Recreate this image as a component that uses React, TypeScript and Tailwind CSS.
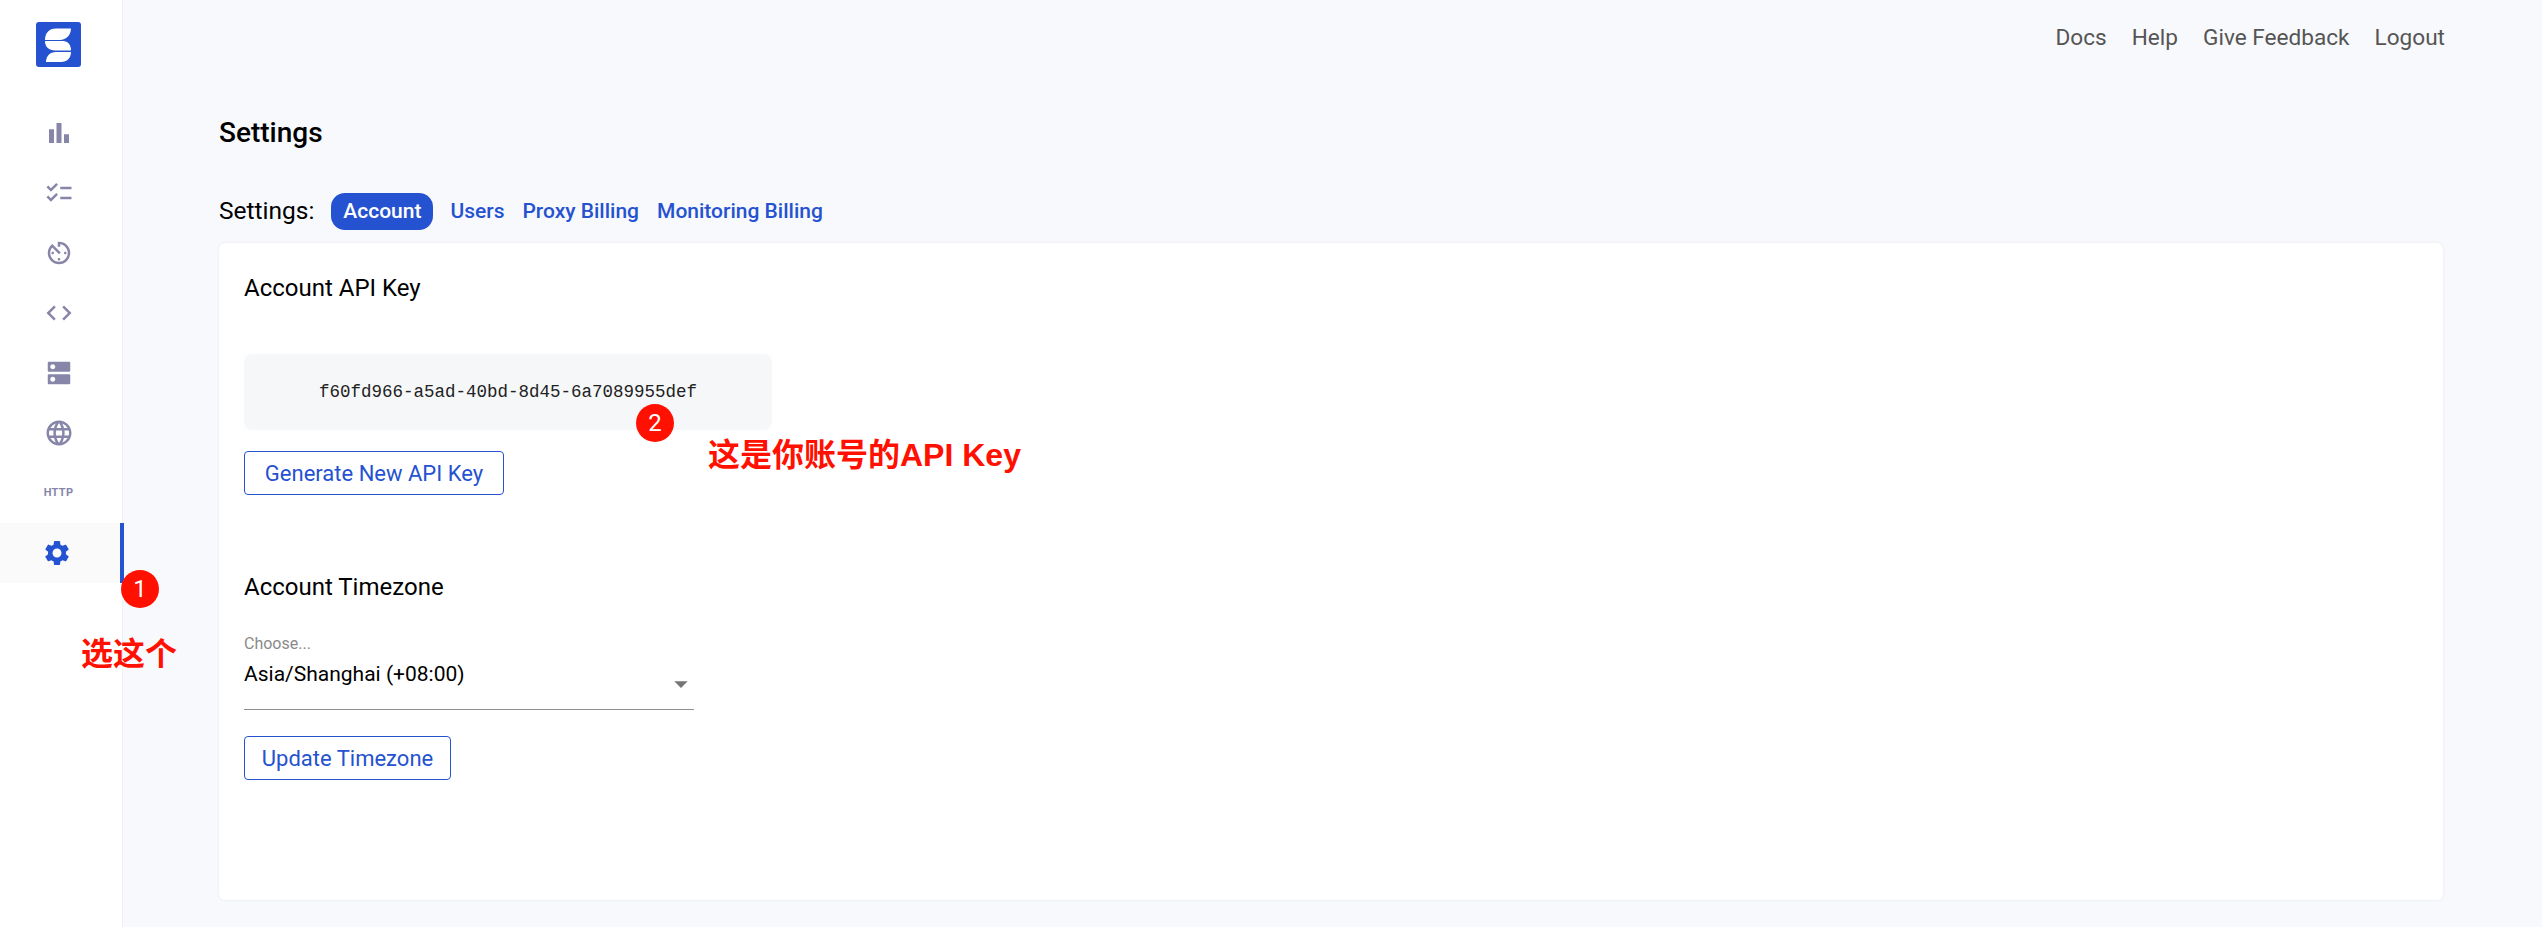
import React from 'react';
import { MdBarChart, MdChecklist, MdAvTimer, MdCode, MdDns, MdLanguage, MdSettings, MdArrowDropDown } from 'react-icons/md';

const navIcons = [MdBarChart, MdChecklist, MdAvTimer, MdCode, MdDns, MdLanguage];

function Logo() {
  return (
    <svg width="45" height="45" viewBox="0 0 45 45">
      <rect width="45" height="45" rx="3" fill="#2552d0" />
      <path d="M35 6.5H20C13 6.5 9 11 9 18H24C30 18 35 13 35 6.5Z" fill="#fff" />
      <path d="M9 19H27C32 19 35 23 35 28.5H19C13 28.5 9 25 9 19Z" fill="#fff" />
      <path d="M35 30H20C14 30 10 34 10 40H25C31 40 35 36 35 30Z" fill="#fff" />
    </svg>
  );
}

function Sidebar() {
  return (
    <aside className="w-[123px] shrink-0 bg-white border-r border-[#eef0f6]">
      <div className="flex justify-center h-[103px] pt-[22px] pr-[5px]">
        <Logo />
      </div>
      {navIcons.map((Icon, i) => (
        <div key={i} className="h-[60px] flex items-center justify-center pr-[5px] text-[#8786a9]">
          <Icon size={30} />
        </div>
      ))}
      <div className="h-[60px] flex items-center justify-center pr-[5px] text-[#8786a9] text-[11px] font-bold tracking-[0.3px]">HTTP</div>
      <div className="relative h-[60px] flex items-center justify-center bg-[#fafafa] pr-[8px] text-[#2552d0]">
        <MdSettings size={30} />
        <div className="absolute -right-[2px] top-0 bottom-0 w-[4px] bg-[#2552d0]" />
      </div>
    </aside>
  );
}

function OutlineButton({ label, width }: { label: string; width: string }) {
  return (
    <button className={`${width} h-[44px] rounded-[4px] border border-[#2552d0] bg-white text-[#2552d0] text-[22px]`}>
      {label}
    </button>
  );
}

function Badge({ n, className }: { n: number; className: string }) {
  return (
    <div className={`absolute w-[38px] h-[38px] rounded-full bg-[#ff1000] text-white flex items-center justify-center text-[24px] ${className}`}>
      {n}
    </div>
  );
}

export default function App() {
  return (
    <div className="relative flex h-[927px] overflow-hidden bg-[#f8f9fd] font-['Roboto','Noto_Sans_CJK_SC',sans-serif]">
      <Sidebar />
      <main className="flex-1 min-w-0 pl-[96px] pr-[99px]">
        <div className="h-[75px] flex items-center justify-end gap-[25px] text-[#555555] text-[22.6px] -mr-[2px]">
          <span>Docs</span>
          <span>Help</span>
          <span>Give Feedback</span>
          <span>Logout</span>
        </div>
        <h1 className="mt-[38px] text-[28px] leading-[40px] font-medium text-black">Settings</h1>
        <div className="mt-[40px] h-[37px] flex items-center text-[#2552d0] text-[21px] font-medium">
          <span className="text-black text-[24.5px] font-normal mr-[17px]">Settings:</span>
          <span className="h-[37px] w-[102px] rounded-[14px] bg-[#2552d0] text-white flex items-center justify-center mr-[17px]">Account</span>
          <span className="mr-[18px]">Users</span>
          <span className="mr-[18px]">Proxy Billing</span>
          <span>Monitoring Billing</span>
        </div>
        <section className="mt-[13px] h-[657px] bg-white rounded-[6px] shadow-[0_0_3px_rgba(0,0,0,0.08)] px-[25px] pt-[30px]">
          <h2 className="text-[24px] leading-[30px] text-black">Account API Key</h2>
          <div className="mt-[51px] w-[528px] h-[76px] pt-[1px] rounded-[8px] bg-[#f6f7f9] flex items-center justify-center font-['Liberation_Mono',monospace] text-[17.5px] text-[#222222]">
            f60fd966-a5ad-40bd-8d45-6a7089955def
          </div>
          <div className="mt-[21px]">
            <OutlineButton label="Generate New API Key" width="w-[260px]" />
          </div>
          <h2 className="mt-[77px] text-[24px] leading-[30px] text-black">Account Timezone</h2>
          <div className="relative mt-[33px] w-[450px] h-[75px] border-b border-[#8f8f8f]">
            <div className="text-[16px] leading-[18px] text-[#8a8a8a]">Choose...</div>
            <div className="mt-[8px] text-[21px] leading-[26px] text-black">Asia/Shanghai (+08:00)</div>
            <MdArrowDropDown size={32} className="absolute right-[-3px] top-[33px] text-[#757575]" />
          </div>
          <div className="mt-[26px]">
            <OutlineButton label="Update Timezone" width="w-[207px]" />
          </div>
        </section>
      </main>
      <Badge n={1} className="left-[121px] top-[570px]" />
      <Badge n={2} className="left-[636px] top-[404px]" />
      <div className="absolute left-[81px] top-[632px] text-[32px] leading-[44px] font-bold text-[#ff1000] font-['Liberation_Sans','Noto_Sans_CJK_SC',sans-serif]">选这个</div>
      <div className="absolute left-[708px] top-[433px] text-[32px] leading-[44px] font-bold text-[#ff1000] font-['Liberation_Sans','Noto_Sans_CJK_SC',sans-serif]">这是你账号的API Key</div>
    </div>
  );
}
